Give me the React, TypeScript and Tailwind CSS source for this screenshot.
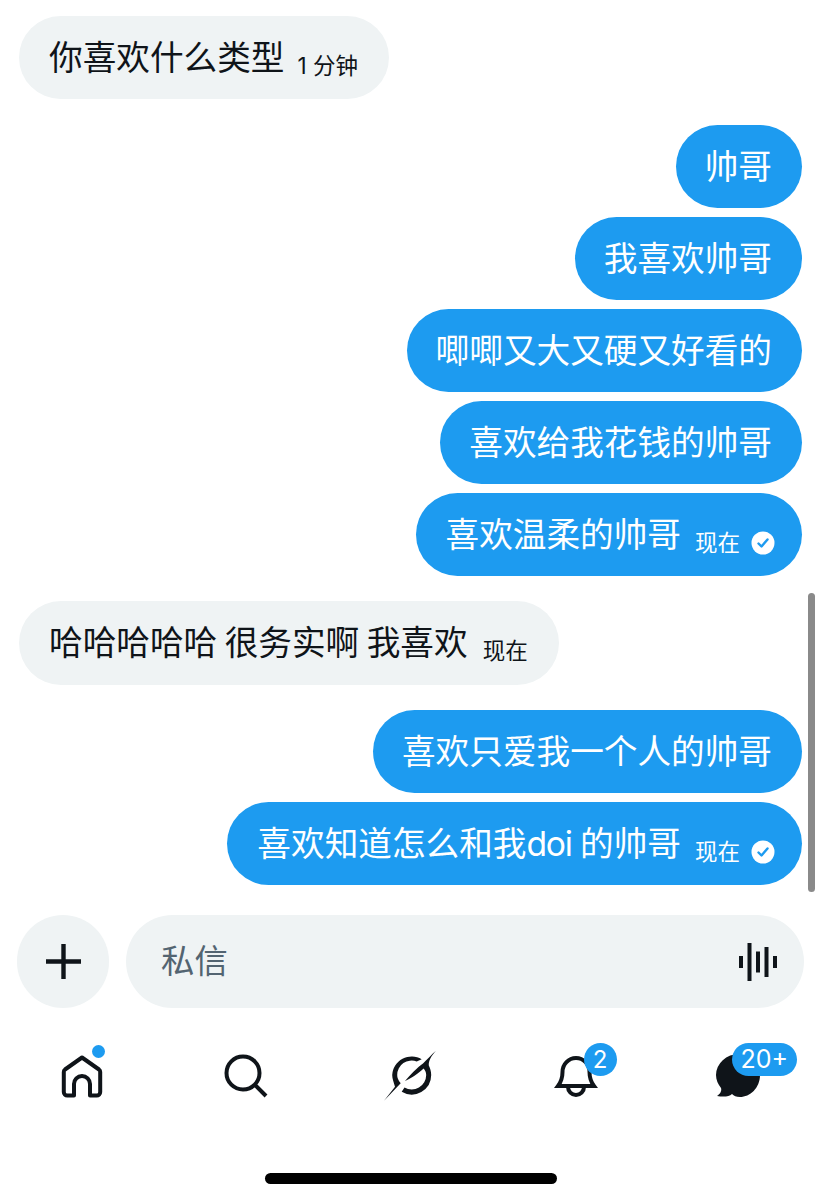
import type { ReactNode } from 'react';

const FONT = 'font-[Inter,"Noto_Sans_CJK_SC",sans-serif]';

type Msg = { id: number; text: ReactNode; time?: string; read?: boolean; gap: string };

const MESSAGES_TOP: Msg[] = [
  { id: 1, text: '帅哥', gap: 'mt-[26px]' },
  { id: 2, text: '我喜欢帅哥', gap: 'mt-[9px]' },
  { id: 3, text: '唧唧又大又硬又好看的', gap: 'mt-[9px]' },
  { id: 4, text: '喜欢给我花钱的帅哥', gap: 'mt-[9px]' },
  { id: 5, text: '喜欢温柔的帅哥', time: '现在', read: true, gap: 'mt-[9px]' },
];

const MESSAGES_BOTTOM: Msg[] = [
  { id: 6, text: '喜欢只爱我一个人的帅哥', gap: 'mt-[25px]' },
  {
    id: 7,
    text: (
      <>
        喜欢知道怎么和我<span className="tracking-[-1.2px]">doi </span>的帅哥
      </>
    ),
    time: '现在',
    read: true,
    gap: 'mt-[9px]',
  },
];

function ReadCheck() {
  return (
    <svg width="24" height="24" viewBox="0 0 24 24" className="ml-[11px] mt-[17px] shrink-0">
      <circle cx="12" cy="12" r="11.5" fill="#fff" />
      <path d="M7.5 12.5l3 3 6-7" fill="none" stroke="#1d9bf0" strokeWidth="2.4" strokeLinecap="round" strokeLinejoin="round" />
    </svg>
  );
}

function Sent({ msg }: { msg: Msg }) {
  return (
    <div className={`${msg.gap} flex justify-end`}>
      <div className={`flex h-[83px] items-center rounded-[42px] bg-[#1d9bf0] text-white ${msg.read ? 'pl-[30px] pr-[27px]' : 'pl-[29px] pr-[30px]'}`}>
        <span className="whitespace-pre text-[33.65px] leading-none">{msg.text}</span>
        {msg.time && <span className="ml-[14px] mt-[17px] whitespace-nowrap text-[22.5px] leading-none">{msg.time}</span>}
        {msg.read && <ReadCheck />}
      </div>
    </div>
  );
}

function Received({ text, time, className, timeGap }: { text: string; time: string; className: string; timeGap: string }) {
  return (
    <div className={`${className} flex justify-start`}>
      <div className="flex items-center rounded-[42px] bg-[#eff3f4] pl-[30px] pr-[31px] text-[#0f1419]">
        <span className="whitespace-pre text-[33.65px] leading-none [word-spacing:-2px]">{text}</span>
        <span className={`${timeGap} mt-[17px] whitespace-nowrap text-[22.5px] leading-none`}>{time}</span>
      </div>
    </div>
  );
}

function NavCell({ children }: { children: ReactNode }) {
  return <div className="relative flex h-[64px] items-center justify-center">{children}</div>;
}

export default function App() {
  return (
    <div className={`${FONT} relative h-[1200px] w-[821px] overflow-hidden bg-white`}>
      <div className="pl-[19px] pr-[19px] pt-[16px]">
        <Received text="你喜欢什么类型" time="1 分钟" className="h-[83px]" timeGap="ml-[13px]" />
        {MESSAGES_TOP.map((m) => (
          <Sent key={m.id} msg={m} />
        ))}
        <Received text="哈哈哈哈哈 很务实啊 我喜欢" time="现在" className="mt-[25px] h-[84px]" timeGap="ml-[15px]" />
        {MESSAGES_BOTTOM.map((m) => (
          <Sent key={m.id} msg={m} />
        ))}
      </div>

      {/* scroll indicator */}
      <div className="absolute left-[808px] top-[593px] h-[299px] w-[7px] rounded-full bg-[#8a8a8a]" />

      {/* composer */}
      <div className="mt-[30px] flex items-center pl-[17px] pr-[17px]">
        <div className="flex h-[93px] w-[92px] shrink-0 items-center justify-center rounded-full bg-[#eff3f4]">
          <svg width="35" height="35" viewBox="0 0 35 35">
            <path d="M17.500 0v35M0 17.500h35" stroke="#0f1419" strokeWidth="4.4" />
          </svg>
        </div>
        <div className="ml-[17px] flex h-[93px] flex-1 items-center justify-between rounded-[47px] bg-[#eff3f4] pl-[35px] pr-[27px]">
          <span className="text-[33.4px] leading-none text-[#536471]">私信</span>
          <svg width="38" height="40" viewBox="0 0 38 40">
            <path d="M2 14v12M10.500 1v38M19 9.500v21M27.500 5v30M36 14v12" stroke="#0f1419" strokeWidth="4" />
          </svg>
        </div>
      </div>

      {/* bottom nav */}
      <div className="mt-[36px] grid grid-cols-5">
        <NavCell>
          <svg width="48" height="48" viewBox="0 0 48 48">
            <path
              d="M24 5.500L41 17.500a3 3 0 0 1 1.200 2.500V40a3.500 3.500 0 0 1-3.500 3.500H32V32a8 8 0 0 0-16 0v11.500H9.300A3.500 3.500 0 0 1 5.800 40V20a3 3 0 0 1 1.200-2.500Z"
              fill="none"
              stroke="#0f1419"
              strokeWidth="4"
              strokeLinejoin="round"
            />
          </svg>
          <span className="absolute left-[92px] top-[1px] h-[13px] w-[13px] rounded-full bg-[#1d9bf0]" />
        </NavCell>
        <NavCell>
          <svg width="48" height="48" viewBox="0 0 48 48">
            <circle cx="21" cy="21" r="16.500" fill="none" stroke="#0f1419" strokeWidth="4" />
            <path d="M33 33l11 11" stroke="#0f1419" strokeWidth="4" />
          </svg>
        </NavCell>
        <NavCell>
          <svg width="56" height="56" viewBox="0 0 56 56">
            <path
              d="M39.700 11.300A19.500 19.500 0 0 0 10.200 27c0 4 1.500 7 2.800 11.700L2 52.700 18.700 35.300C16 32 15.200 29.500 15.200 27A14.500 14.500 0 0 1 34.700 13.400Z"
              fill="#0f1419"
            />
            <path
              d="M54 2.700C49 8 46.500 13 46.800 17.500 48 20 49.200 23 49.200 27A19.500 19.500 0 0 1 19.700 43.700L22.500 39.500A14.500 14.500 0 0 0 44.200 27C44.200 24 43 22 41.500 20.500 38 24 30 30 23 33 28 27 36 19 41 15.500 45 11.500 50 6 54 2.700Z"
              fill="#0f1419"
            />
          </svg>
        </NavCell>
        <NavCell>
          <svg width="46" height="48" viewBox="0 0 46 48">
            <path
              d="M6 34c3-4 4.500-8 4.500-14a13.500 14 0 0 1 27 0c0 6 1.500 10 4.500 14Z"
              fill="none"
              stroke="#0f1419"
              strokeWidth="4"
              strokeLinejoin="miter"
            />
            <path d="M16 35a8 8 0 0 0 16 0" fill="none" stroke="#0f1419" strokeWidth="4" />
          </svg>
          <span className="absolute left-[91px] top-[-1px] flex h-[33px] w-[33px] items-center justify-center rounded-full bg-[#1d9bf0] text-[24px] leading-none text-white">
            2
          </span>
        </NavCell>
        <NavCell>
          <svg width="48" height="46" viewBox="0 0 48 46">
            <path
              d="M24 1a23 21 0 0 1 21 21c0 13-10 22-20 22-4 0-6-1-8-3-3 3-9 3-15 2 3-2 5-5 4-8C3 31 1 27 1 22A23 21 0 0 1 24 1Z"
              fill="#0f1419"
            />
          </svg>
          <span className="absolute left-[75px] top-[-1px] flex h-[33px] w-[65px] items-center justify-center rounded-full bg-[#1d9bf0] text-[25px] leading-none text-white">
            20+
          </span>
        </NavCell>
      </div>

      {/* home indicator */}
      <div className="mx-auto mt-[65px] h-[11px] w-[292px] rounded-full bg-black" />
    </div>
  );
}
